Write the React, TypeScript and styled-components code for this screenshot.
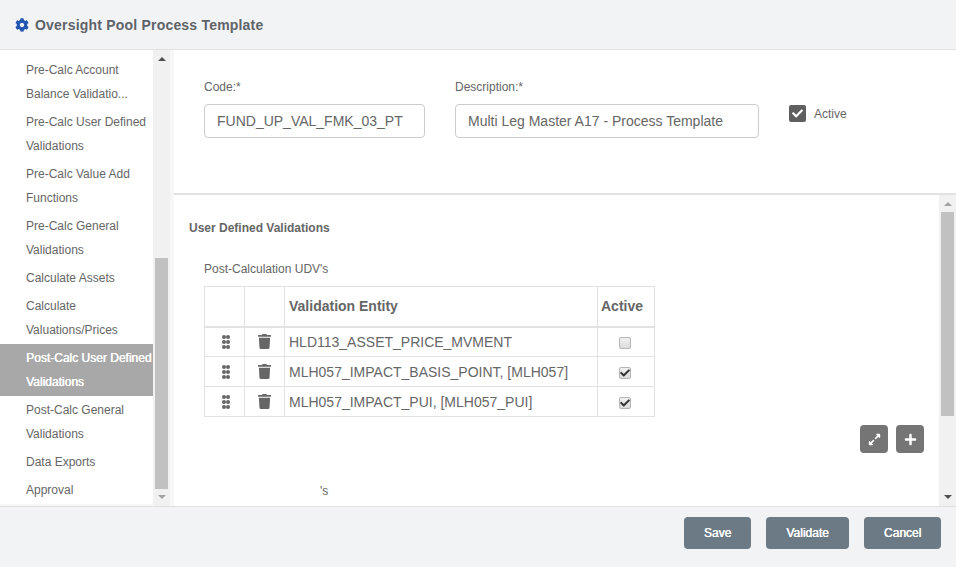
import React from "react";
import styled, { createGlobalStyle } from "styled-components";
import { FaCheck, FaCog, FaExpandAlt, FaPlus, FaTrash } from "react-icons/fa";

const GlobalStyle = createGlobalStyle`
  html, body {
    margin: 0;
    padding: 0;
    background: #fff;
    font-family: "Liberation Sans", Arial, sans-serif;
    color: #666;
  }
  * {
    box-sizing: border-box;
  }
`;

const Page = styled.div`
  width: 956px;
  height: 567px;
  display: flex;
  flex-direction: column;
  overflow: hidden;
`;

const Header = styled.header`
  height: 50px;
  flex: none;
  display: flex;
  align-items: center;
  gap: 6px;
  padding-left: 15px;
  background: #f2f3f5;
  border-bottom: 1px solid #e0e0e0;
`;

const Title = styled.h1`
  margin: 0;
  font-size: 14px;
  font-weight: bold;
  letter-spacing: 0.2px;
  color: #5f6368;
`;

const Body = styled.div`
  flex: 1;
  min-height: 0;
  display: flex;
`;

const Sidebar = styled.nav`
  width: 174px;
  flex: none;
  display: flex;
  background: #f7f7f7;
`;

const NavList = styled.ul`
  list-style: none;
  width: 153px;
  height: 454px;
  margin: 0;
  padding: 8px 0 0;
  display: flex;
  flex-direction: column;
  gap: 4px;
  background: #fff;
  overflow: hidden;
`;

const NavItem = styled.li<{ $active?: boolean }>`
  flex: none;
  margin: ${(p) => (p.$active ? "-2px 0" : "0")};
  padding: ${(p) => (p.$active ? "2px 0 2px 26px" : "0 0 0 26px")};
  font-size: 12px;
  line-height: 24px;
  white-space: nowrap;
  color: ${(p) => (p.$active ? "#fff" : "#666")};
  text-shadow: ${(p) => (p.$active ? "0.5px 0 0 #fff" : "none")};
  background: ${(p) => (p.$active ? "#a8a8a8" : "transparent")};
`;

const ScrollTrack = styled.div`
  width: 17px;
  flex: none;
  display: flex;
  flex-direction: column;
  align-items: center;
  background: #f1f1f1;
`;

const ScrollThumb = styled.div<{ $top: number; $height: number }>`
  width: 13px;
  height: ${(p) => p.$height}px;
  margin-top: ${(p) => p.$top}px;
  background: #c1c1c1;
`;

const Arrow = styled.span<{ $down?: boolean; $dark?: boolean }>`
  width: 0;
  height: 0;
  flex: none;
  border-left: 4px solid transparent;
  border-right: 4px solid transparent;
  ${(p) => {
    const colour = p.$dark ? "#505050" : "#a3a3a3";
    return p.$down
      ? `border-top: 4px solid ${colour};`
      : `border-bottom: 4px solid ${colour};`;
  }}
`;

const DownArrowSlot = styled.div`
  flex: 1;
  display: flex;
  align-items: flex-end;
  padding-bottom: 7px;
`;

const UpArrowSlot = styled.div`
  flex: none;
  height: 17px;
  padding-top: 7px;
  display: flex;
  justify-content: center;
  width: 100%;
`;

const Main = styled.main`
  flex: 1;
  min-width: 0;
  display: flex;
  flex-direction: column;
`;

const FormPanel = styled.section`
  height: 145px;
  flex: none;
  display: flex;
  align-items: flex-start;
  gap: 30px;
  padding: 30px 0 0 30px;
  border-bottom: 2px solid #e2e2e2;
`;

const Field = styled.div<{ $width: number }>`
  width: ${(p) => p.$width}px;
  display: flex;
  flex-direction: column;
  gap: 9px;
`;

const Label = styled.label`
  font-size: 12px;
  line-height: 15px;
  color: #666;
`;

const TextInput = styled.input`
  width: 100%;
  height: 34px;
  padding: 0 12px;
  border: 1px solid #ccc;
  border-radius: 4px;
  font-family: inherit;
  font-size: 14px;
  color: #666;
  outline: none;
`;

const ActiveToggle = styled.div`
  display: flex;
  align-items: center;
  gap: 8px;
  margin-top: 25px;
  font-size: 12px;
  color: #666;
`;

const ToggleBox = styled.span`
  width: 17px;
  height: 17px;
  display: flex;
  align-items: center;
  justify-content: center;
  border-radius: 2px;
  background: #5f5f5f;
  color: #fff;
  font-size: 11px;
`;

const LowerPanel = styled.div`
  flex: 1;
  min-height: 0;
  display: flex;
`;

const LowerContent = styled.section`
  flex: 1;
  min-width: 0;
  padding: 26px 15px 0 15px;
  display: flex;
  flex-direction: column;
`;

const SectionTitle = styled.h2`
  margin: 0;
  font-size: 12px;
  line-height: 14px;
  font-weight: bold;
  color: #666;
`;

const TableCaption = styled.div`
  margin: 27px 0 0 15px;
  font-size: 12px;
  line-height: 14px;
  color: #666;
`;

const Table = styled.table`
  width: 450px;
  margin: 10px 0 0 15px;
  border-collapse: collapse;
  table-layout: fixed;
  font-size: 14px;
  color: #666;
`;

const Th = styled.th<{ $inset?: number }>`
  height: 40px;
  padding: 0 ${(p) => p.$inset ?? 4}px;
  border: 1px solid #e2e2e2;
  border-bottom-width: 2px;
  font-weight: bold;
  text-align: left;
`;

const Td = styled.td<{ $center?: boolean }>`
  height: 30px;
  padding: 0 4px;
  border: 1px solid #e2e2e2;
  text-align: ${(p) => (p.$center ? "center" : "left")};
  white-space: nowrap;
  color: #666;
`;

const IconCell = styled.span`
  display: flex;
  justify-content: center;
  align-items: center;
  color: #666;
  font-size: 15px;
`;

const GripSvg = styled.svg`
  width: 8px;
  height: 14px;
  margin-left: 2px;
  fill: currentColor;
`;

const RowCheck = styled.span`
  display: inline-flex;
  align-items: center;
  justify-content: center;
  vertical-align: middle;
  width: 12px;
  height: 12px;
  margin-right: 2px;
  border: 1px solid #b5b5b5;
  border-radius: 2px;
  background: linear-gradient(#f0f0f0, #dcdcdc);
  color: #333;
  font-size: 10px;
`;

const TableActions = styled.div`
  display: flex;
  justify-content: flex-end;
  gap: 8px;
  margin: 8px 0 0;
`;

const IconButton = styled.button`
  width: 28px;
  height: 28px;
  padding: 0;
  display: flex;
  align-items: center;
  justify-content: center;
  border: none;
  border-radius: 4px;
  background: #757575;
  color: #fff;
  font-size: 13px;
`;

const StrayText = styled.div`
  margin: 31px 0 0 131px;
  font-size: 12px;
  line-height: 14px;
  color: #666;
`;

const Footer = styled.footer`
  height: 61px;
  flex: none;
  display: flex;
  justify-content: flex-end;
  gap: 15px;
  padding: 10px 15px 0 0;
  background: #f2f3f5;
  border-top: 1px solid #e0e0e0;
`;

const FooterButton = styled.button<{ $width: number }>`
  width: ${(p) => p.$width}px;
  height: 32px;
  border: none;
  border-radius: 4px;
  background: #6c7a85;
  color: #fff;
  font-family: inherit;
  font-size: 12px;
  text-shadow: 0.5px 0 0 #fff;
`;

const GripIcon = () => (
  <GripSvg viewBox="0 0 8 14">
    {[2, 7, 12].map((cy) => (
      <g key={cy}>
        <circle cx="2" cy={cy} r="2" />
        <circle cx="6" cy={cy} r="2" />
      </g>
    ))}
  </GripSvg>
);

const navItems = [
  ["Pre-Calc Account", "Balance Validatio..."],
  ["Pre-Calc User Defined", "Validations"],
  ["Pre-Calc Value Add", "Functions"],
  ["Pre-Calc General", "Validations"],
  ["Calculate Assets"],
  ["Calculate", "Valuations/Prices"],
  ["Post-Calc User Defined", "Validations"],
  ["Post-Calc General", "Validations"],
  ["Data Exports"],
  ["Approval"],
];

const rows = [
  { name: "HLD113_ASSET_PRICE_MVMENT", active: false },
  { name: "MLH057_IMPACT_BASIS_POINT, [MLH057]", active: true },
  { name: "MLH057_IMPACT_PUI, [MLH057_PUI]", active: true },
];

export default function App() {
  return (
    <Page>
      <GlobalStyle />
      <Header>
        <FaCog size={14} color="#2156b0" />
        <Title>Oversight Pool Process Template</Title>
      </Header>
      <Body>
        <Sidebar>
          <NavList>
            {navItems.map((lines) => (
              <NavItem
                key={lines.join(" ")}
                $active={lines[0] === "Post-Calc User Defined"}
              >
                {lines.map((line) => (
                  <div key={line}>{line}</div>
                ))}
              </NavItem>
            ))}
          </NavList>
          <ScrollTrack>
            <UpArrowSlot>
              <Arrow $dark />
            </UpArrowSlot>
            <ScrollThumb $top={191} $height={231} />
            <DownArrowSlot>
              <Arrow $down />
            </DownArrowSlot>
          </ScrollTrack>
        </Sidebar>
        <Main>
          <FormPanel>
            <Field $width={221}>
              <Label>Code:*</Label>
              <TextInput readOnly value="FUND_UP_VAL_FMK_03_PT" />
            </Field>
            <Field $width={304}>
              <Label>Description:*</Label>
              <TextInput readOnly value="Multi Leg Master A17 - Process Template" />
            </Field>
            <ActiveToggle>
              <ToggleBox>
                <FaCheck />
              </ToggleBox>
              Active
            </ActiveToggle>
          </FormPanel>
          <LowerPanel>
            <LowerContent>
              <SectionTitle>User Defined Validations</SectionTitle>
              <TableCaption>Post-Calculation UDV's</TableCaption>
              <Table>
                <colgroup>
                  <col width={40} />
                  <col width={40} />
                  <col width={313} />
                  <col width={57} />
                </colgroup>
                <thead>
                  <tr>
                    <Th />
                    <Th />
                    <Th>Validation Entity</Th>
                    <Th $inset={3}>Active</Th>
                  </tr>
                </thead>
                <tbody>
                  {rows.map((row) => (
                    <tr key={row.name}>
                      <Td>
                        <IconCell>
                          <GripIcon />
                        </IconCell>
                      </Td>
                      <Td>
                        <IconCell>
                          <FaTrash />
                        </IconCell>
                      </Td>
                      <Td>{row.name}</Td>
                      <Td $center>
                        <RowCheck>{row.active && <FaCheck />}</RowCheck>
                      </Td>
                    </tr>
                  ))}
                </tbody>
              </Table>
              <TableActions>
                <IconButton>
                  <FaExpandAlt />
                </IconButton>
                <IconButton>
                  <FaPlus />
                </IconButton>
              </TableActions>
              <StrayText>'s</StrayText>
            </LowerContent>
            <ScrollTrack>
              <UpArrowSlot>
                <Arrow />
              </UpArrowSlot>
              <ScrollThumb $top={0} $height={204} />
              <DownArrowSlot>
                <Arrow $down $dark />
              </DownArrowSlot>
            </ScrollTrack>
          </LowerPanel>
        </Main>
      </Body>
      <Footer>
        <FooterButton $width={67}>Save</FooterButton>
        <FooterButton $width={83}>Validate</FooterButton>
        <FooterButton $width={77}>Cancel</FooterButton>
      </Footer>
    </Page>
  );
}
